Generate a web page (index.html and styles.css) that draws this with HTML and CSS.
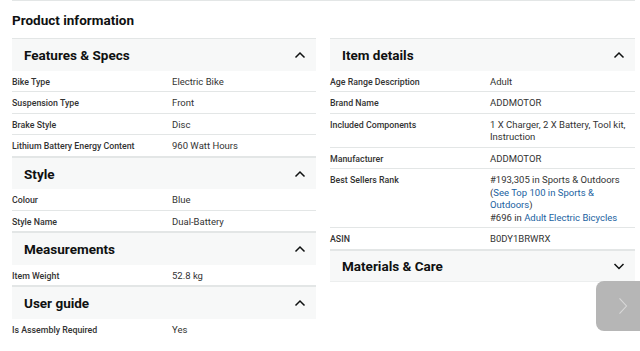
FILE: index.html
```html
<!DOCTYPE html>
<html lang="en">
<head>
    <meta charset="UTF-8">
    <meta name="viewport" content="width=device-width, initial-scale=1.0">
    <title>Product information</title>
    <link rel="stylesheet" href="styles.css">
</head>
<body>

    <div class="page">
        <div class="top-rule"></div>
        <h2 class="page-title">Product information</h2>

        <div class="columns">
            <!-- Left column -->
            <div class="column">
                <div class="section-head">
                    <span>Features &amp; Specs</span>
                    <svg class="chevron" viewBox="0 0 12 8"><path d="M1.5 6.5 L6 2 L10.5 6.5"/></svg>
                </div>
                <div class="row"><div class="label">Bike Type</div><div class="value">Electric Bike</div></div>
                <div class="row"><div class="label">Suspension Type</div><div class="value">Front</div></div>
                <div class="row"><div class="label">Brake Style</div><div class="value">Disc</div></div>
                <div class="row"><div class="label">Lithium Battery Energy Content</div><div class="value">960 Watt Hours</div></div>

                <div class="section-head">
                    <span>Style</span>
                    <svg class="chevron" viewBox="0 0 12 8"><path d="M1.5 6.5 L6 2 L10.5 6.5"/></svg>
                </div>
                <div class="row"><div class="label">Colour</div><div class="value">Blue</div></div>
                <div class="row"><div class="label">Style Name</div><div class="value">Dual-Battery</div></div>

                <div class="section-head">
                    <span>Measurements</span>
                    <svg class="chevron" viewBox="0 0 12 8"><path d="M1.5 6.5 L6 2 L10.5 6.5"/></svg>
                </div>
                <div class="row"><div class="label">Item Weight</div><div class="value">52.8 kg</div></div>

                <div class="section-head">
                    <span>User guide</span>
                    <svg class="chevron" viewBox="0 0 12 8"><path d="M1.5 6.5 L6 2 L10.5 6.5"/></svg>
                </div>
                <div class="row"><div class="label">Is Assembly Required</div><div class="value">Yes</div></div>
            </div>

            <!-- Right column -->
            <div class="column">
                <div class="section-head">
                    <span>Item details</span>
                    <svg class="chevron" viewBox="0 0 12 8"><path d="M1.5 6.5 L6 2 L10.5 6.5"/></svg>
                </div>
                <div class="row"><div class="label">Age Range Description</div><div class="value">Adult</div></div>
                <div class="row"><div class="label">Brand Name</div><div class="value">ADDMOTOR</div></div>
                <div class="row"><div class="label">Included Components</div><div class="value">1 X Charger, 2 X Battery, Tool kit, Instruction</div></div>
                <div class="row"><div class="label">Manufacturer</div><div class="value">ADDMOTOR</div></div>
                <div class="row">
                    <div class="label">Best Sellers Rank</div>
                    <div class="value">
                        <div>#193,305 in Sports &amp; Outdoors</div>
                        <div>(<a href="#">See Top 100 in Sports &amp;<br>Outdoors</a>)</div>
                        <div>#696 in <a href="#">Adult Electric Bicycles</a></div>
                    </div>
                </div>
                <div class="row"><div class="label">ASIN</div><div class="value">B0DY1BRWRX</div></div>

                <div class="section-head closed">
                    <span>Materials &amp; Care</span>
                    <svg class="chevron" viewBox="0 0 12 8"><path d="M1.5 2 L6 6.5 L10.5 2"/></svg>
                </div>
            </div>
        </div>
    </div>

    <!-- Botón siguiente flotante -->
    <div class="next-button">
        <svg viewBox="0 0 20 30"><path d="M5 4 L15 15 L5 26"/></svg>
    </div>

</body>
</html>
```

FILE: styles.css
```css
/* Estilos generales */
* {
    margin: 0;
    padding: 0;
    box-sizing: border-box;
    font-family: Roboto, 'Noto Sans', sans-serif;
}

body {
    background-color: #fff;
    color: #0f1111;
    overflow: hidden;
}

.page {
    padding: 0 5px 0 12px;
}

.top-rule {
    height: 1px;
    background-color: #e3e6e6;
}

.page-title {
    font-size: 13.5px;
    font-weight: bold;
    line-height: 18px;
    padding: 10px 0 9px;
}

/* Columnas */
.columns {
    display: grid;
    grid-template-columns: 304px 305px;
    column-gap: 14px;
}

.section-head {
    height: 32.5px;
    display: flex;
    align-items: center;
    justify-content: space-between;
    padding: 1px 10px 0 12px;
    background-color: #f7f8f8;
    border-top: 1px solid #e3e6e6;
    font-size: 13.5px;
    font-weight: bold;
}

.section-head.closed {
    border-bottom: 1px solid #eceeee;
}

.chevron {
    width: 12px;
    height: 8px;
    fill: none;
    stroke: #0f1111;
    stroke-width: 1.5;
}

.row {
    display: flex;
    padding: 5px 0 3px;
    border-bottom: 1px solid #e3e6e6;
    font-size: 9.5px;
    line-height: 12.5px;
}

.row:last-child {
    border-bottom: none;
}

.label {
    width: 160px;
    flex-shrink: 0;
    font-size: 8.8px;
    font-weight: 500;
    color: #333;
}

.value {
    flex: 1;
    color: #333;
    padding-right: 8px;
}

.value a {
    color: #2162a1;
    text-decoration: none;
}

/* Botón flotante */
.next-button {
    position: absolute;
    left: 596px;
    top: 281px;
    width: 56px;
    height: 50px;
    border-radius: 8px;
    background-color: #b6b6b6;
    display: flex;
    align-items: center;
    padding-left: 20px;
}

.next-button svg {
    width: 14px;
    height: 26px;
    fill: none;
    stroke: #d9d9d9;
    stroke-width: 1.5;
}
```
